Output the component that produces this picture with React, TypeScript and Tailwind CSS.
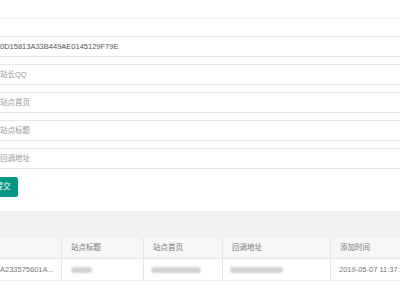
import React from "react";

const fields = [
  { value: "0D15813A33B449AE0145129F79E", placeholder: "" },
  { value: "", placeholder: "站长QQ" },
  { value: "", placeholder: "站点首页" },
  { value: "", placeholder: "站点标题" },
  { value: "", placeholder: "回调地址" },
];

const cols = [
  { title: "", width: "w-[61px]" },
  { title: "站点标题", width: "w-[82px]" },
  { title: "站点首页", width: "w-[79px]" },
  { title: "回调地址", width: "w-[108px]" },
  { title: "添加时间", width: "w-[120px]" },
];

function Blur({ w }: { w: string }) {
  return <div className={`${w} h-[6px] rounded-sm bg-[#d2d2d2] blur-[1px]`} />;
}

export default function App() {
  return (
    <div
      className="w-[400px] h-[300px] overflow-hidden bg-white text-[7.5px] text-[#777]"
      style={{ fontFamily: '"Liberation Sans", "Noto Sans CJK SC", sans-serif' }}
    >
      {/* form */}
      <div className="ml-[-10px] w-[420px]">
        <div className="h-[20px] mt-[-1px] border border-[#eee] mb-[17px]" />
        {fields.map((f, i) => (
          <div
            key={i}
            className="h-[21px] border border-[#e9e9e9] mb-[7px] flex items-center pl-[9px] pt-[1px]"
          >
            {f.value ? (
              <span className="text-[#555]">{f.value}</span>
            ) : (
              <span className="text-[#999]">{f.placeholder}</span>
            )}
          </div>
        ))}
        <div className="pt-[1px]">
          <button className="ml-[-2px] w-[30px] h-[20px] rounded-[2px] bg-[#009688] text-white text-[7.5px] flex items-center justify-center">
            提交
          </button>
        </div>
      </div>

      {/* table */}
      <div className="mt-[14px] h-[27px] bg-[#f2f2f2]" />
      <div className="flex h-[21px] bg-[#f7f7f7] border-b border-[#e6e6e6]">
        {cols.map((c, i) => (
          <div
            key={i}
            className={`${c.width} shrink-0 flex items-center pl-[9px] ${i > 0 ? "border-l border-[#e6e6e6]" : ""}`}
          >
            {c.title}
          </div>
        ))}
      </div>
      <div className="flex h-[22px] border-b border-[#eee]">
        <div className="w-[61px] shrink-0 flex items-center overflow-hidden whitespace-nowrap">
          <span>A233575601A...</span>
        </div>
        <div className="w-[82px] shrink-0 flex items-center pl-[9px] border-l border-[#e6e6e6]">
          <Blur w="w-[21px]" />
        </div>
        <div className="w-[79px] shrink-0 flex items-center pl-[7px] border-l border-[#e6e6e6]">
          <Blur w="w-[50px]" />
        </div>
        <div className="w-[108px] shrink-0 flex items-center pl-[7px] border-l border-[#e6e6e6]">
          <Blur w="w-[53px]" />
        </div>
        <div className="w-[120px] shrink-0 flex items-center pl-[8px] border-l border-[#e6e6e6] whitespace-nowrap">
          2019-05-07 11:37:25
        </div>
      </div>
    </div>
  );
}
